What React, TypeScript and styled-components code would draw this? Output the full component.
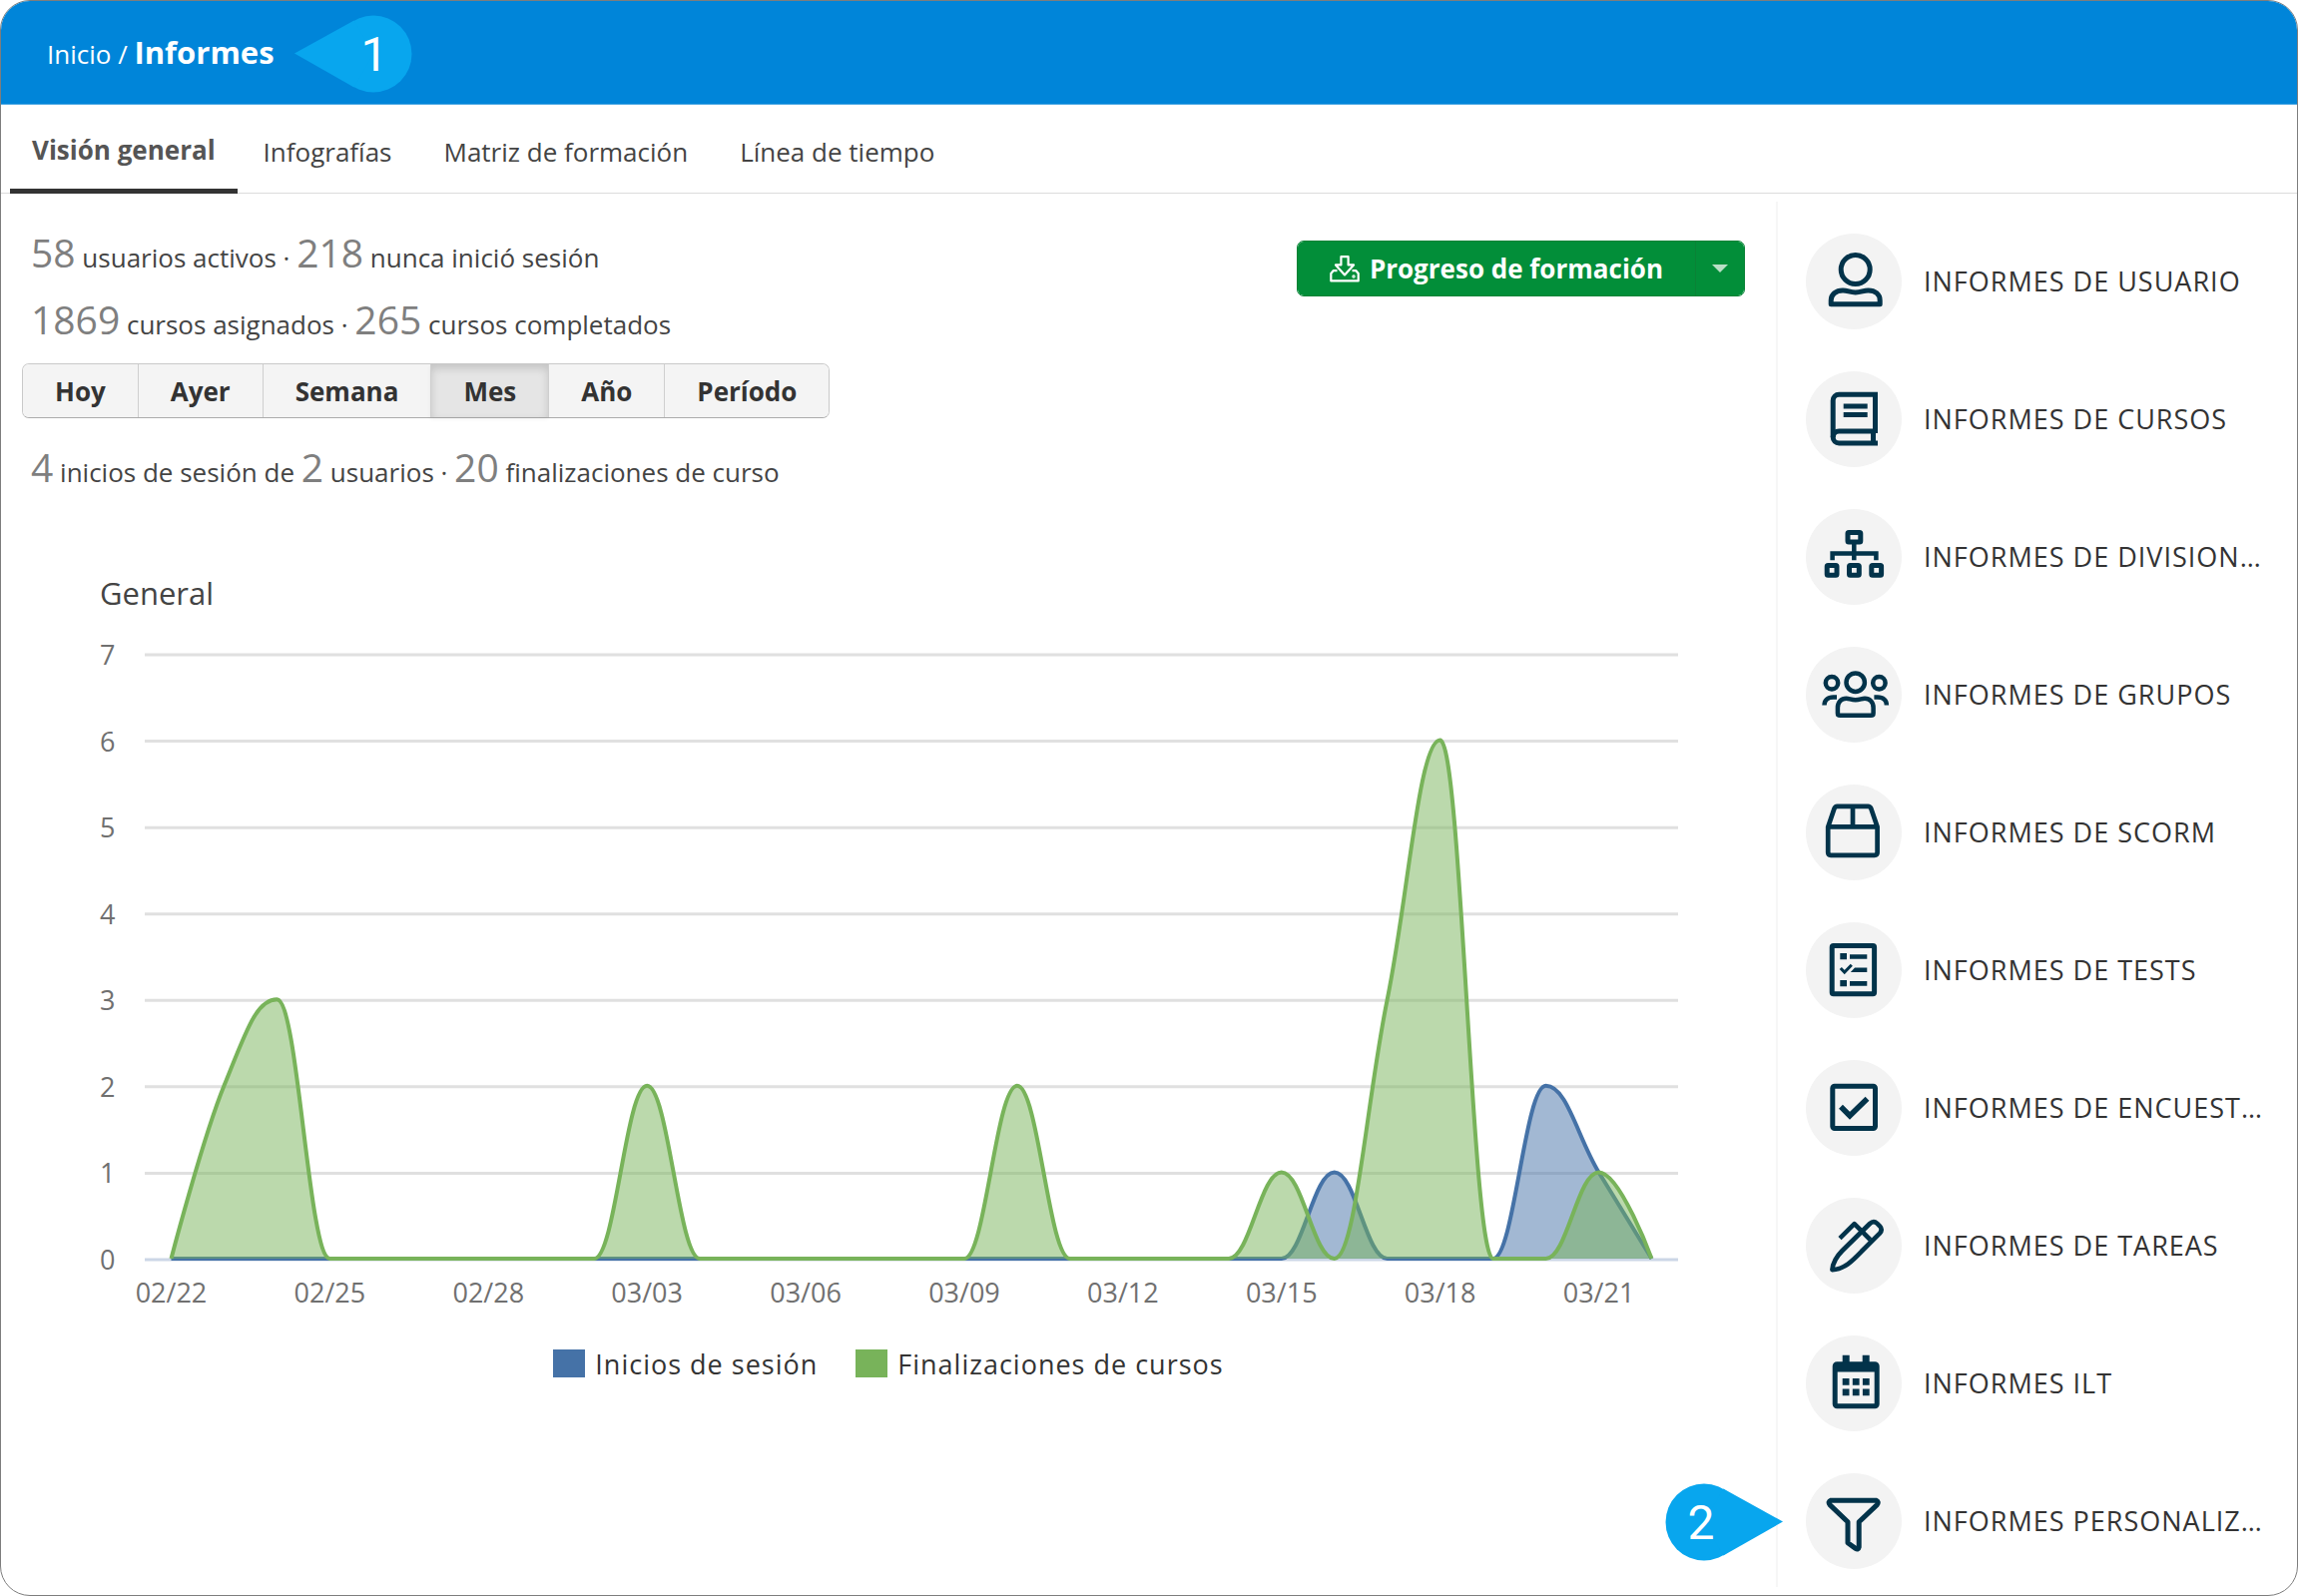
import React from "react";
import styled, { createGlobalStyle, css } from "styled-components";

const FONT = '"Open Sans", "Noto Sans", sans-serif';

const GlobalStyle = createGlobalStyle`
  *, *::before, *::after { box-sizing: border-box; }
  body {
    margin: 0;
    background: #fff;
    color: #444;
    font-family: ${FONT};
    font-size: 26px;
  }
  button { font-family: inherit; }
`;

const Page = styled.div`
  min-height: 100vh;
  display: flex;
  flex-direction: column;
  overflow: hidden;
  border: 1px solid #7d7d7d;
  border-radius: 30px;
  background: #fff;
`;

const Header = styled.header`
  height: 104px;
  display: flex;
  align-items: center;
  gap: 20px;
  padding: 2px 46px 0;
  background: #0085d9;
  border-bottom: 1px solid #4fa9e3;
`;

const Breadcrumb = styled.nav`
  padding-bottom: 4px;
  color: #fff;
  white-space: pre;
`;

const Crumb = styled.a`
  color: inherit;
  text-decoration: none;
`;

const CurrentCrumb = styled.strong`
  font-size: 31px;
  line-height: 40px;
  font-weight: 700;
`;

const Tabs = styled.nav`
  height: 89px;
  display: flex;
  padding: 0 9px;
  border-bottom: 1px solid #dcdcdc;
`;

const Tab = styled.a<{ $active?: boolean }>`
  display: flex;
  align-items: center;
  margin-bottom: -1px;
  padding: 5px 26px 0;
  color: #444;
  text-decoration: none;
  white-space: nowrap;
  ${(p) =>
    p.$active &&
    css`
      padding: 5px 22px 0;
      color: #555;
      font-weight: 700;
      border-bottom: 5px solid #333;
    `}
`;

const Body = styled.div`
  flex: 1;
  display: flex;
`;

const Main = styled.main`
  flex: 1;
  min-width: 0;
  padding-top: 31px;
`;

const Summary = styled.div`
  display: flex;
  justify-content: space-between;
  align-items: flex-start;
  padding: 0 31px 0 30px;
`;

const Stat = styled.p`
  margin: 0;
  line-height: 67px;
`;

const PeriodStat = styled(Stat)`
  padding: 0 30px;
`;

const Figure = styled.span`
  color: #7f7f7f;
  font-size: 39px;
  line-height: 39px;
`;

const SplitButton = styled.div`
  display: flex;
  height: 56px;
  margin-top: 16px;
  border: 1px solid #0a8236;
  border-radius: 7px;
  overflow: hidden;
`;

const GreenButton = styled.button`
  display: flex;
  align-items: center;
  justify-content: center;
  gap: 10px;
  padding: 0 32px;
  border: 0;
  background: #028e39;
  color: #fff;
  font-size: 26px;
  font-weight: 700;
`;

const CaretButton = styled(GreenButton)`
  padding: 0 16px;
  border-left: 1px solid #0a8236;
`;

const Caret = styled.span`
  border: 8px solid transparent;
  border-top-color: #b9dfc6;
  border-bottom: 0;
`;

const Periods = styled.div`
  display: inline-flex;
  height: 55px;
  margin: 5px 21px 21px;
  border: 1px solid #c9c9c9;
  border-bottom-color: #ababab;
  border-radius: 7px;
`;

const Period = styled.button<{ $active?: boolean }>`
  padding: 0 32px;
  border: 0;
  border-left: 1px solid #cfcfcf;
  background: #f4f4f4;
  color: #333;
  font-size: 26px;
  font-weight: 700;
  &:first-child {
    border-left: 0;
    border-radius: 6px 0 0 6px;
  }
  &:last-child {
    border-radius: 0 6px 6px 0;
  }
  ${(p) =>
    p.$active &&
    css`
      background: #e5e5e5;
      box-shadow: inset 0 4px 8px rgba(0, 0, 0, 0.15), 0 2px 4px rgba(0, 0, 0, 0.05);
    `}
`;

const Chart = styled.svg`
  display: block;
  width: 100%;
  height: auto;
  font-family: ${FONT};
`;

const Legend = styled.ul`
  display: flex;
  justify-content: center;
  gap: 38px;
  margin: 16px 0 0;
  padding: 0;
  list-style: none;
`;

const LegendItem = styled.li`
  display: flex;
  align-items: center;
  gap: 10px;
  color: #333;
  font-size: 27px;
  line-height: 36px;
  letter-spacing: 1px;
`;

const Swatch = styled.span<{ $color: string }>`
  width: 32px;
  height: 28px;
  margin-bottom: 2px;
  background: ${(p) => p.$color};
`;

const Sidebar = styled.aside`
  flex: 0 0 522px;
  min-width: 0;
  margin: 8px 0;
  padding: 32px 28px 0 28px;
  border-left: 2px solid #f6f6f6;
`;

const ReportList = styled.ul`
  display: flex;
  flex-direction: column;
  gap: 42px;
  margin: 0;
  padding: 0;
  list-style: none;
`;

const ReportItem = styled.li`
  position: relative;
`;

const ReportLink = styled.a`
  display: flex;
  align-items: center;
  gap: 22px;
  color: #333;
  font-size: 27px;
  font-weight: 500;
  letter-spacing: 1px;
  text-decoration: none;
`;

const ReportLabel = styled.span`
  min-width: 0;
  padding-bottom: 2px;
  overflow: hidden;
  text-overflow: ellipsis;
  text-transform: uppercase;
  white-space: nowrap;
`;

const IconDisc = styled.svg`
  flex: none;
  width: 96px;
  height: 96px;
  border-radius: 50%;
  background: #f3f3f3;
  fill: none;
  stroke: #02334a;
  stroke-width: 5;
`;

const MarkerSvg = styled.svg`
  flex: none;
  display: block;
  width: 118px;
  height: 78px;
  fill: #08a6ee;
  text {
    fill: #fff;
    font-family: Roboto, sans-serif;
    font-size: 48px;
    text-anchor: middle;
  }
`;

const SideMarker = styled.div`
  position: absolute;
  left: -141px;
  top: 10px;
`;

const Marker = ({ label, flip }: { label: string; flip?: boolean }) => (
  <MarkerSvg viewBox="0 0 118 78" role="img" aria-label={label}>
    <g transform={flip ? "translate(118 0) scale(-1 1)" : undefined}>
      <circle cx="79" cy="39" r="38.5" />
      <path d="M0 38.5 L59.7 5.4 L79 39 L59.7 72.6 Z" />
    </g>
    <text x={flip ? 36 : 80} y="56">
      {label}
    </text>
  </MarkerSvg>
);

const solid = { fill: "#02334a", stroke: "none" };

const icons: Record<string, React.ReactNode> = {
  user: (
    <>
      <circle cx="49.7" cy="36" r="14.5" />
      <path d="M25.2 70.8 V67 C25.2 61 30 57 37 57 C42 57 44 59 49.7 59 C55.4 59 57.5 57 62.5 57 C69.5 57 74.2 61 74.2 67 V70.8 Z" strokeLinejoin="round" />
    </>
  ),
  book: (
    <>
      <path d="M69.5 62 V23.2 H33.2 a6 6 0 0 0 -6 6 V66 a6 6 0 0 0 6 6 H72" />
      <path d="M27.2 66 a6 6 0 0 1 6 -6 H69.5 M67.5 60 V72" />
      <path d="M37.7 35 H61.7 M37.7 43.4 H61.7" />
    </>
  ),
  sitemap: (
    <>
      <rect x="42" y="23.6" width="12.8" height="9.5" rx="1" />
      <path d="M48.3 34 V51.3 M26.6 51.3 V44.4 H70.4 V51.3" strokeWidth="4.5" />
      <rect x="21.2" y="56.4" width="9.8" height="9.8" rx="1" />
      <rect x="43.5" y="56.4" width="9.8" height="9.8" rx="1" />
      <rect x="65.8" y="56.4" width="9.8" height="9.8" rx="1" />
    </>
  ),
  groups: (
    <g strokeWidth="4.5">
      <circle cx="49.7" cy="35.7" r="9.2" />
      <circle cx="26" cy="36.2" r="6.2" />
      <circle cx="73.4" cy="36.2" r="6.2" />
      <path d="M34.3 68.8 H65.2 q2.4 0 2.4 -2.4 V61 C67.6 55.5 64 51.7 59 51.7 C56 51.7 54 53.3 49.7 53.3 C45.5 53.3 43.5 51.7 40.5 51.7 C35.5 51.7 31.9 55.5 31.9 61 V66.4 q0 2.4 2.4 2.4 Z" />
      <path d="M31 50.4 H27.5 C22 50.4 18.5 53.5 18.5 58.6 M68.4 50.4 H71.9 C77.4 50.4 80.9 53.5 80.9 58.6" />
    </g>
  ),
  box: (
    <path d="M22.2 42.4 L28.5 24 q0.8 -2.2 3 -2.2 H62.3 q2 0 3 2.2 L71.6 42.4 V68 q0 2.8 -2.8 2.8 H25 q-2.8 0 -2.8 -2.8 Z M22.2 42.4 H71.6 M47 22 V42.4" strokeWidth="4.7" />
  ),
  tests: (
    <>
      <rect x="26.2" y="23.4" width="42.4" height="48.4" rx="1.5" />
      <path d="M34.3 31h6.7v6.3h-6.7z M44 32.3h17.3v4.5H44z M44.8 50 L49 45.5 H61.3 V50 Z M34.3 58h6.7v6.3h-6.7z M44 59h17.3v4.7H44z" {...solid} />
      <path d="M34.8 46 L38.7 50 L45.8 42.8" strokeWidth="3" />
    </>
  ),
  survey: (
    <>
      <rect x="26.8" y="26.2" width="42.7" height="42.3" rx="2" />
      <path d="M35 46.8 L44 55.8 L61.5 38.8" strokeWidth="5.5" />
    </>
  ),
  pen: (
    <g strokeWidth="4.6" strokeLinejoin="round">
      <path d="M26.4 72.2 C27.2 63.5 31 58.5 36.5 53 L64 26 Q67.8 22.4 71.3 25.6 L74 28.3 Q77.3 32 74 35.6 L56.5 53 C47 62.8 39 71.4 26.4 72.2 Z" />
      <path d="M34 40.6 L48.6 26.2 L64.5 42" />
    </g>
  ),
  calendar: (
    <>
      <rect x="29.2" y="28.8" width="42" height="42" rx="2" />
      <path d="M28 28h44v8.4H28z M36.7 19.7h7v8h-7z M56.7 19.7h7v8h-7z" {...solid} />
      <path d="M36.7 43h6.8v6.8h-6.8z M46.8 43h6.8v6.8h-6.8z M56.9 43h6.8v6.8h-6.8z M36.7 53.4h6.8v6.8h-6.8z M46.8 53.4h6.8v6.8h-6.8z M56.9 53.4h6.8v6.8h-6.8z" {...solid} />
    </>
  ),
  funnel: (
    <path d="M25.2 27.2 H70.2 Q73.6 28.5 71.3 31.6 L53.2 48.8 V74 Q52.5 77.2 49.8 75.4 L42 69.8 V48.8 L24 31.6 Q21.7 28.5 25.2 27.2 Z" strokeLinejoin="round" />
  ),
};

const reports = [
  { icon: "user", label: "Informes de usuario" },
  { icon: "book", label: "Informes de cursos" },
  { icon: "sitemap", label: "Informes de divisiones" },
  { icon: "groups", label: "Informes de grupos" },
  { icon: "box", label: "Informes de SCORM" },
  { icon: "tests", label: "Informes de tests" },
  { icon: "survey", label: "Informes de encuestas" },
  { icon: "pen", label: "Informes de tareas" },
  { icon: "calendar", label: "Informes ILT" },
  { icon: "funnel", label: "Informes personalizados", marker: "2" },
];

const DownloadIcon = () => (
  <svg width="30" height="27" viewBox="0 0 30 27" fill="none" stroke="#fff" strokeWidth="2.2" strokeLinejoin="round" aria-hidden="true">
    <path d="M11.4 1.2 H18.6 V9.4 H24 L15 19.4 L6 9.4 H11.4 Z" />
    <path d="M7.5 15.2 H3.6 L1.3 18 V25.4 H28.7 V18 L26.4 15.2 H22.5" />
    <circle cx="24" cy="21" r="0.6" />
  </svg>
);

const BLUE = "#4572a7";
const GREEN = "#78b35a";

const DAYS = 29;
const PLOT = { left: 144, right: 1680, top: 148, bottom: 754 };
const MAX = 7;

const xAt = (day: number) => PLOT.left + ((day + 0.5) * (PLOT.right - PLOT.left)) / DAYS;
const yAt = (value: number) => PLOT.bottom - (value * (PLOT.bottom - PLOT.top)) / MAX;

const series = (values: Record<number, number>) =>
  Array.from({ length: DAYS }, (_, day) => values[day] ?? 0);

const logins = series({ 22: 1, 26: 2, 27: 1 });
const completions = series({ 1: 2, 2: 3, 9: 2, 16: 2, 21: 1, 23: 3, 24: 6, 27: 1 });

// Smooth curve whose control points never overshoot the neighbouring values.
function spline(values: number[]) {
  const pts = values.map((v, i) => ({ x: xAt(i), y: yAt(v) }));
  let path = `M${pts[0].x} ${pts[0].y}`;
  let out = pts[0];
  for (let i = 1; i < pts.length; i++) {
    const prev = pts[i - 1];
    const cur = pts[i];
    const next = pts[i + 1];
    let inPt = { ...cur };
    let outPt = { ...cur };
    if (next) {
      inPt = { x: (1.5 * cur.x + prev.x) / 2.5, y: (1.5 * cur.y + prev.y) / 2.5 };
      outPt = { x: (1.5 * cur.x + next.x) / 2.5, y: (1.5 * cur.y + next.y) / 2.5 };
      const fix =
        ((outPt.y - inPt.y) * (outPt.x - cur.x)) / (outPt.x - inPt.x) + cur.y - outPt.y;
      inPt.y += fix;
      outPt.y += fix;
      const clampIn = Math.min(Math.max(inPt.y, Math.min(prev.y, cur.y)), Math.max(prev.y, cur.y));
      if (clampIn !== inPt.y) {
        inPt.y = clampIn;
        outPt.y = 2 * cur.y - clampIn;
      }
      const clampOut = Math.min(Math.max(outPt.y, Math.min(next.y, cur.y)), Math.max(next.y, cur.y));
      if (clampOut !== outPt.y) {
        outPt.y = clampOut;
        inPt.y = 2 * cur.y - clampOut;
      }
    }
    path += ` C${out.x} ${out.y} ${inPt.x} ${inPt.y} ${cur.x} ${cur.y}`;
    out = outPt;
  }
  return path;
}

const Area = ({ values, color }: { values: number[]; color: string }) => {
  const line = spline(values);
  return (
    <g>
      <path d={`${line} L${xAt(0)} ${yAt(0)} Z`} fill={color} fillOpacity="0.5" />
      <path d={line} fill="none" stroke={color} strokeWidth="4" strokeLinejoin="round" />
    </g>
  );
};

const dates = ["02/22", "02/25", "02/28", "03/03", "03/06", "03/09", "03/12", "03/15", "03/18", "03/21"];

const ActivityChart = () => (
  <Chart viewBox="0 0 1778 826" role="img" aria-label="General">
    <text x="99" y="99" fontSize="31" fill="#444">
      General
    </text>
    {Array.from({ length: MAX + 1 }, (_, value) => (
      <g key={value}>
        <path
          d={`M${PLOT.left} ${yAt(value) + 1} H${PLOT.right}`}
          stroke={value ? "#e0e0e0" : "#ccd6e6"}
          strokeWidth="3"
        />
        <text x="99" y={yAt(value) + 11} fontSize="27" fill="#707070">
          {value}
        </text>
      </g>
    ))}
    <Area values={logins} color={BLUE} />
    <Area values={completions} color={GREEN} />
    {dates.map((date, i) => (
      <text key={date} x={xAt(i * 3)} y="798" fontSize="27" fill="#707070" textAnchor="middle">
        {date}
      </text>
    ))}
  </Chart>
);

const periods = ["Hoy", "Ayer", "Semana", "Mes", "Año", "Período"];

export default function App() {
  return (
    <>
      <GlobalStyle />
      <Page>
        <Header>
          <Breadcrumb aria-label="Ruta">
            <Crumb href="#inicio">Inicio</Crumb> / <CurrentCrumb>Informes</CurrentCrumb>
          </Breadcrumb>
          <Marker label="1" />
        </Header>
        <Tabs aria-label="Secciones">
          <Tab href="#general" $active aria-current="page">Visión general</Tab>
          <Tab href="#infografias">Infografías</Tab>
          <Tab href="#matriz">Matriz de formación</Tab>
          <Tab href="#linea">Línea de tiempo</Tab>
        </Tabs>
        <Body>
          <Main>
            <Summary>
              <div>
                <Stat>
                  <Figure>58</Figure> usuarios activos · <Figure>218</Figure> nunca inició sesión
                </Stat>
                <Stat>
                  <Figure>1869</Figure> cursos asignados · <Figure>265</Figure> cursos completados
                </Stat>
              </div>
              <SplitButton>
                <GreenButton type="button">
                  <DownloadIcon />
                  Progreso de formación
                </GreenButton>
                <CaretButton type="button" aria-label="Más opciones">
                  <Caret />
                </CaretButton>
              </SplitButton>
            </Summary>
            <Periods>
              {periods.map((period) => (
                <Period key={period} type="button" $active={period === "Mes"} aria-pressed={period === "Mes"}>
                  {period}
                </Period>
              ))}
            </Periods>
            <PeriodStat>
              <Figure>4</Figure> inicios de sesión de <Figure>2</Figure> usuarios · <Figure>20</Figure> finalizaciones de curso
            </PeriodStat>
            <ActivityChart />
            <Legend>
              <LegendItem>
                <Swatch $color={BLUE} />
                Inicios de sesión
              </LegendItem>
              <LegendItem>
                <Swatch $color={GREEN} />
                Finalizaciones de cursos
              </LegendItem>
            </Legend>
          </Main>
          <Sidebar>
            <ReportList>
              {reports.map(({ icon, label, marker }) => (
                <ReportItem key={icon}>
                  <ReportLink href={`#${icon}`}>
                    <IconDisc viewBox="0 0 96 96" aria-hidden="true">{icons[icon]}</IconDisc>
                    <ReportLabel>{label}</ReportLabel>
                  </ReportLink>
                  {marker && (
                    <SideMarker>
                      <Marker label={marker} flip />
                    </SideMarker>
                  )}
                </ReportItem>
              ))}
            </ReportList>
          </Sidebar>
        </Body>
      </Page>
    </>
  );
}
